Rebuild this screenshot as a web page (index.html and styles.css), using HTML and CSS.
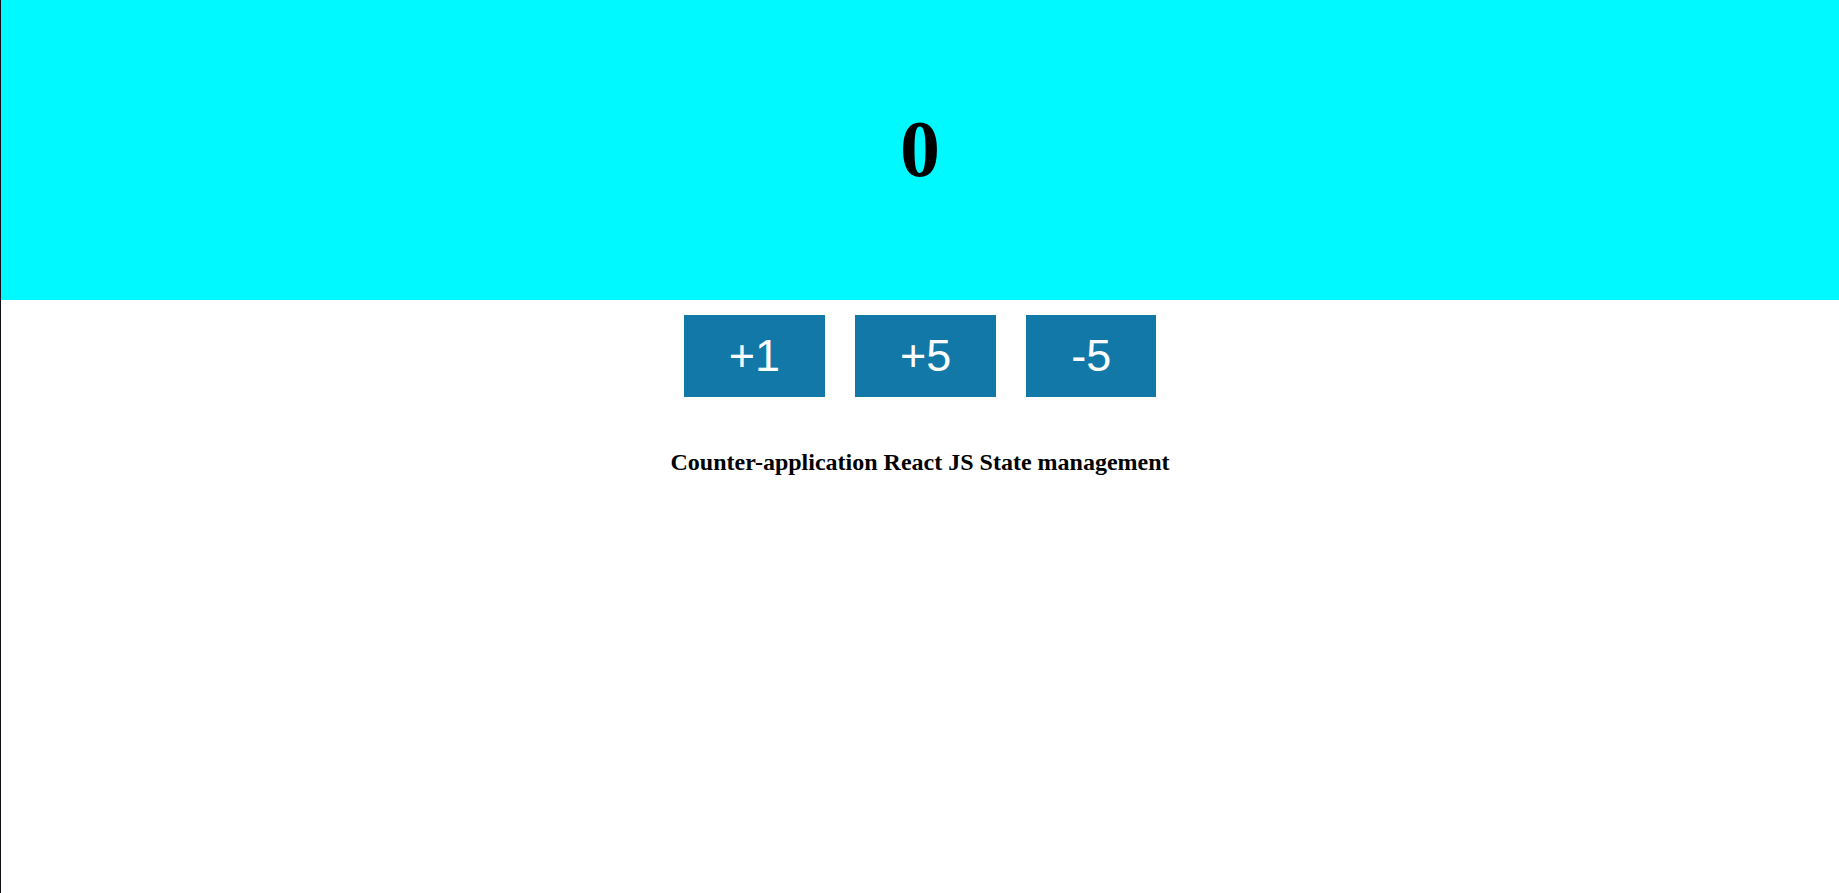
FILE: index.html
```html
<!DOCTYPE html>
<html>
<head>
<meta charset="utf-8">
<link rel="stylesheet" href="styles.css">
<title>Counter</title>
</head>
<body>
<div class="app">
  <header class="display">
    <h1 class="count">0</h1>
  </header>
  <div class="controls">
    <button class="btn">+1</button>
    <button class="btn">+5</button>
    <button class="btn">-5</button>
  </div>
  <p class="caption">Counter-application React JS State management</p>
</div>
</body>
</html>
```
FILE: styles.css
```css
html, body {
  margin: 0;
  padding: 0;
  background: #ffffff;
}
.app {
  min-height: 100vh;
  box-sizing: border-box;
  border-left: 1px solid #101018;
  font-family: "Liberation Serif", "Times New Roman", serif;
}
.display {
  height: 300px;
  box-sizing: border-box;
  padding-top: 109px;
  background: #00f8ff;
  text-align: center;
}
.count {
  margin: 0;
  font-size: 80px;
  line-height: 80px;
  font-weight: bold;
  color: #000;
}
.controls {
  display: flex;
  justify-content: center;
  gap: 30px;
  margin-top: 15px;
}
.btn {
  border: none;
  margin: 0;
  height: 82px;
  padding: 0 45px;
  background: #1278a8;
  color: #ffffff;
  font-family: "Liberation Sans", Arial, sans-serif;
  font-size: 45px;
  line-height: 82px;
}
.caption {
  margin: 51px 0 0;
  text-align: center;
  font-size: 24px;
  line-height: 28px;
  font-weight: bold;
  color: #000;
}
```
